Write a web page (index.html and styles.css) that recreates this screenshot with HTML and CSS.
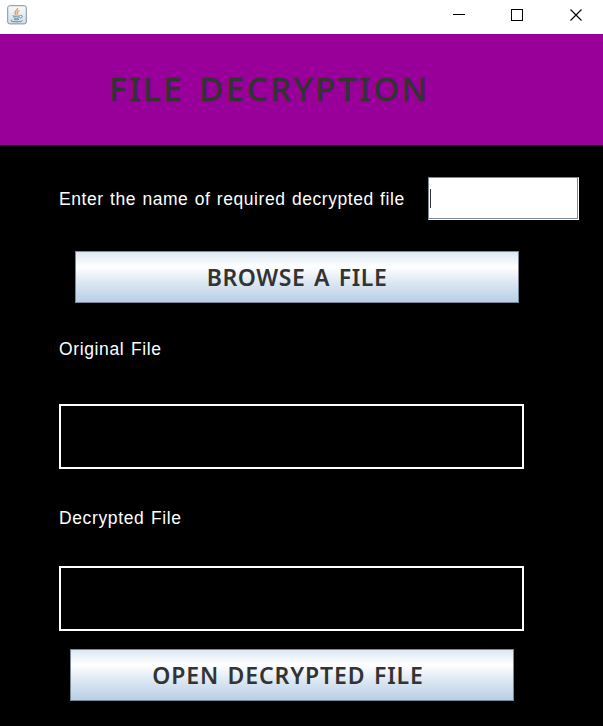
FILE: index.html
```html
<!DOCTYPE html>
<html lang="en">
<head>
<meta charset="utf-8">
<title>File Decryption</title>
<link rel="stylesheet" href="styles.css">
</head>
<body>
<div class="titlebar">
  <svg class="app-icon" width="20" height="20" viewBox="0 0 20 20">
    <defs><linearGradient id="tile" x2="0" y2="1"><stop stop-color="#f7fafb"/><stop offset="1" stop-color="#d3dfe7"/></linearGradient></defs>
    <rect x=".7" y=".7" width="18.6" height="18.2" rx="2" fill="url(#tile)" stroke="#7f929e"/>
    <path d="M10.5 3c1 2-3 3-2.500 5 .2 1 1.200 1.500 1.500 2.300M12.500 5.500c-3 1.500-2.500 2.500-1.500 4" fill="none" stroke="#e4955c" stroke-width="1.300"/>
    <path d="M6 10.500c-2 1 8 1 7 0M6.500 12.500c1 1 4.500 1 6 0M7 14.200c1 .8 4 .8 5 0M13.500 10.500c3-.5 2 2.300-.3 2.700M5 14.800c-3 1.200 1 2 5 2s6-.8 5-1.600" fill="none" stroke="#60869e"/>
  </svg>
  <svg class="controls" width="131" height="14" viewBox="0 0 131 14" fill="none" stroke="#000">
    <path d="M0 6.500h12M58.500 1.500h11v11h-11z" shape-rendering="crispEdges"/>
    <path d="M117.500 1.500l11 11M128.500 1.500l-11 11" stroke-width="1.100"/>
  </svg>
</div>
<header class="banner"><h1>FILE DECRYPTION</h1></header>
<main>
  <div class="name-row">
    <label class="label prompt">Enter the name of required decrypted file</label>
    <div class="field"><span class="caret"></span></div>
  </div>
  <button class="button browse"><span>BROWSE A FILE</span></button>
  <div class="label original">Original File</div>
  <div class="box"></div>
  <div class="label decrypted">Decrypted File</div>
  <div class="box second"></div>
  <button class="button open"><span>OPEN DECRYPTED FILE</span></button>
</main>
</body>
</html>
```

FILE: styles.css
```css
* { box-sizing: border-box; }
body { margin: 0; height: 726px; overflow: hidden; background: #000; font-family: "Liberation Sans", sans-serif; }
.titlebar { height: 34px; background: #fff; display: flex; justify-content: space-between; padding: 5px 19px 0 7px; }
.controls { margin-top: 3px; }
.app-icon, .controls { display: block; }
.banner { height: 111px; background: #990099; padding: 32px 0 0 109px; }
h1 { margin: 0; font: 500 33px/46px "Noto Sans", sans-serif; letter-spacing: 2.5px; word-spacing: 4px; color: #333; white-space: nowrap; -webkit-text-stroke: .3px #333; }
main { display: flex; flex-direction: column; align-items: flex-start; padding: 32px 0 0 59px; }
.name-row { display: flex; align-items: center; height: 43px; }
.label { color: #fff; font-size: 17.5px; line-height: 24px; letter-spacing: .62px; word-spacing: 1.2px; white-space: nowrap; }
.prompt { width: 369px; letter-spacing: .55px; word-spacing: 1px; }
.field { width: 151px; height: 43px; padding: 11px 0 0 1px; background: #fff; border: 1px solid #7a8a99; border-right-color: #fff; border-bottom-color: #fff; box-shadow: inset -1px -1px #7a8a99; }
.caret { display: block; width: 1px; height: 19px; background: #333; }
.button { width: 444px; height: 52px; padding: 0; border: 1px solid #7a8a99; border-radius: 0; background: linear-gradient(#dde8f3 0%, #fff 30%, #dde8f3 60%, #b8cfe5 100%); color: #333; font: 600 23px/50px "Noto Sans", sans-serif; letter-spacing: .6px; word-spacing: 2px; text-align: center; }
.browse { margin: 31px 0 0 16px; }
.original { margin-top: 34px; }
.box { width: 465px; height: 65px; margin-top: 43px; border: 2px solid #fff; }
.decrypted { margin-top: 37px; }
.second { margin-top: 36px; }
.open { margin: 18px 0 0 11px; padding-right: 8px; letter-spacing: .9px; word-spacing: 1.5px; }
```
